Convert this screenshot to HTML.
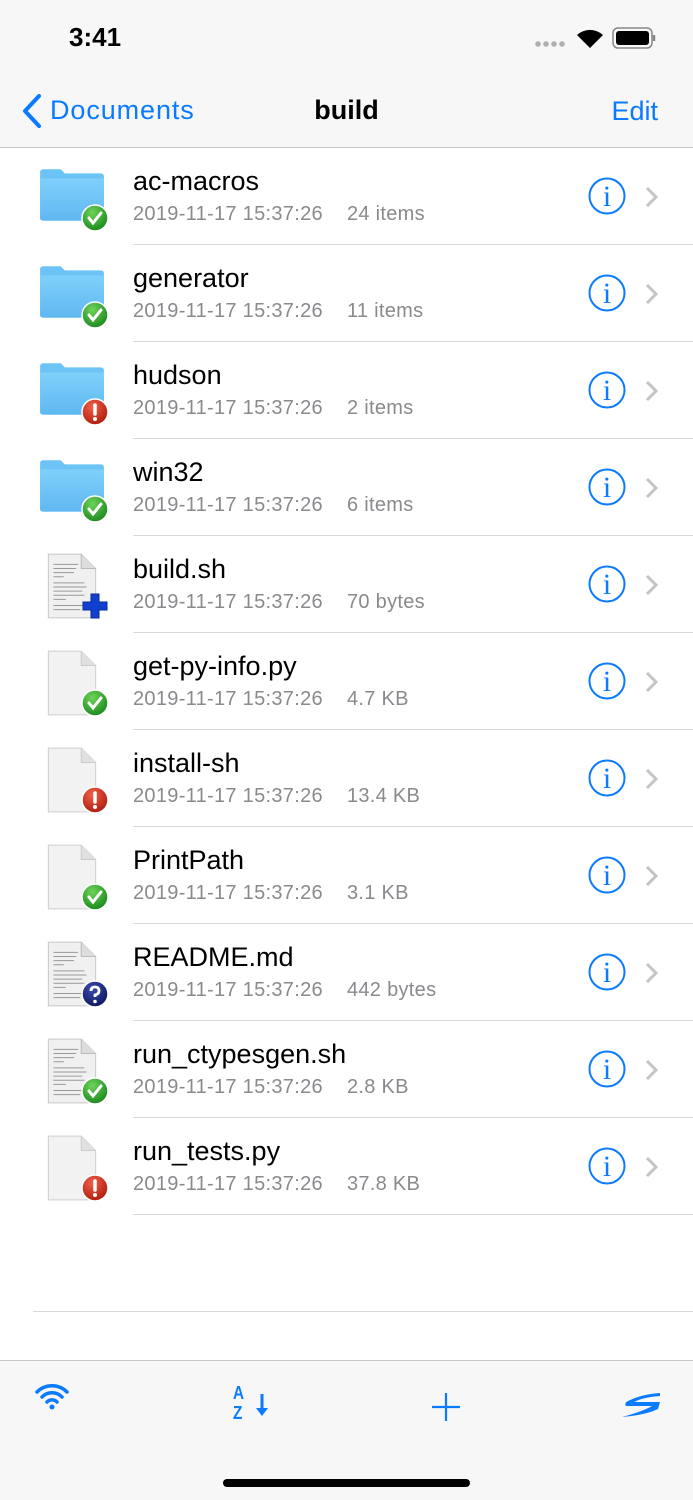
<!DOCTYPE html>
<html><head><meta charset="utf-8"><style>
*{margin:0;padding:0;box-sizing:border-box}
body{width:693px;height:1500px;background:#fff;font-family:"Liberation Sans",Helvetica,sans-serif;position:relative;overflow:hidden}
.top{position:absolute;left:0;top:0;width:693px;height:148px;background:#f7f7f7;border-bottom:1px solid #c8c8cc}
.time{position:absolute;left:69px;top:22px;font-size:26px;font-weight:bold;color:#000}
.back{position:absolute;left:50px;top:95px;font-size:27px;color:#0a7aff;letter-spacing:0.9px}
.title{position:absolute;left:0;width:693px;text-align:center;top:95px;font-size:27px;font-weight:bold}
.edit{position:absolute;right:35px;top:96px;font-size:27px;color:#0a7aff}
.row{position:absolute;left:0;width:693px;height:97px}
.row .sep{position:absolute;left:133px;right:0;bottom:0;height:1px;background:#d8d8dc}
.name{position:absolute;left:133px;top:18px;font-size:27px;color:#000}
.meta{position:absolute;left:133px;top:55px;font-size:20px;color:#8a8a8e;letter-spacing:0.3px}
.meta span{margin-left:24px}
.ic{position:absolute;left:36px;top:14px}
.info{position:absolute;left:588px;top:29px}
.chev{position:absolute;left:645px;top:38px}
.bot{position:absolute;left:0;top:1360px;width:693px;height:140px;background:#f7f7f7;border-top:1px solid #c8c8cc}
.home{position:absolute;left:223px;top:1479px;width:247px;height:8px;border-radius:4px;background:#000}
</style></head><body>
<svg width="0" height="0" style="position:absolute">
<defs>
<linearGradient id="fg" x1="0" y1="0" x2="0" y2="1"><stop offset="0" stop-color="#7fd0fb"/><stop offset="1" stop-color="#5fb8f0"/></linearGradient>
<radialGradient id="gg" cx="0.4" cy="0.3" r="0.7"><stop offset="0" stop-color="#6fd35a"/><stop offset="1" stop-color="#1b8a1e"/></radialGradient>
<radialGradient id="rg" cx="0.4" cy="0.3" r="0.7"><stop offset="0" stop-color="#f06048"/><stop offset="1" stop-color="#b01e10"/></radialGradient>
<radialGradient id="qg" cx="0.4" cy="0.3" r="0.7"><stop offset="0" stop-color="#3a4ab0"/><stop offset="1" stop-color="#101a60"/></radialGradient>
<symbol id="folder" viewBox="0 0 70 70"><path d="M4 10 q0-3 3-3 h17 l4 4 h35 q3 0 3 3 v40 q0 3-3 3 H7 q-3 0-3-3z" fill="#6cc3f5"/><path d="M4 16 h62 v38 q0 3-3 3 H7 q-3 0-3-3z" fill="url(#fg)"/></symbol>
<symbol id="doc" viewBox="0 0 70 70"><path d="M12 4 h32 l14 14 v48 H12z" fill="#f2f2f2" stroke="#d0d0d0"/><path d="M44 4 v14 h14" fill="#e0e0e0" stroke="#ccc"/></symbol>
<symbol id="txt" viewBox="0 0 70 70"><path d="M12 4 h32 l14 14 v48 H12z" fill="#f0f0f0" stroke="#c8c8c8"/><path d="M44 4 v14 h14" fill="#ddd" stroke="#bbb"/><g stroke="#999" stroke-width="1"><path d="M17 14h24M17 18h22M17 22h20M17 26h10M17 32h30M17 36h32M17 40h28M17 44h30M17 48h12M17 54h30M17 58h26"/></g></symbol>
<symbol id="ok" viewBox="0 0 28 28"><circle cx="14" cy="14" r="13" fill="url(#gg)" stroke="#fff" stroke-width="1.5"/><path d="M8 14 l4 5 l8-10" fill="none" stroke="#fff" stroke-width="3" stroke-linecap="round"/></symbol>
<symbol id="err" viewBox="0 0 28 28"><circle cx="14" cy="14" r="13" fill="url(#rg)" stroke="#fff" stroke-width="1.5"/><path d="M14 7 v9" stroke="#fff" stroke-width="3.5" stroke-linecap="round"/><circle cx="14" cy="21" r="2" fill="#fff"/></symbol>
<symbol id="q" viewBox="0 0 28 28"><circle cx="14" cy="14" r="13" fill="url(#qg)" stroke="#fff" stroke-width="1.5"/><path d="M10 11 q0-4 4-4 q4 0 4 4 q0 3-4 4 v2" fill="none" stroke="#fff" stroke-width="2.8"/><circle cx="14" cy="21.5" r="1.8" fill="#fff"/></symbol>
<symbol id="plus" viewBox="0 0 28 28"><path d="M10 2h8v8h8v8h-8v8h-8v-8H2v-8h8z" fill="#1040d0" stroke="#0a2a90"/></symbol>
<symbol id="info" viewBox="0 0 38 38"><circle cx="19" cy="19" r="17.5" fill="none" stroke="#0a7aff" stroke-width="2"/><text x="19" y="29" text-anchor="middle" font-family="Liberation Serif,serif" font-size="30" fill="#0a7aff">i</text></symbol>
</defs></svg>

<div class="top">
<div class="time">3:41</div>
<svg style="position:absolute;left:535px;top:40px" width="32" height="8"><g fill="#b0b0b0"><circle cx="3" cy="4" r="2.8"/><circle cx="11" cy="4" r="2.8"/><circle cx="19" cy="4" r="2.8"/><circle cx="27" cy="4" r="2.8"/></g></svg>
<svg style="position:absolute;left:575px;top:27px" width="30" height="22" viewBox="0 0 30 22"><path d="M15 21 L2 8 A19 19 0 0 1 28 8z" fill="#000"/></svg>
<svg style="position:absolute;left:612px;top:27px" width="46" height="22"><rect x="1" y="1" width="39" height="20" rx="5" fill="none" stroke="#888" stroke-width="1.5"/><rect x="4" y="4" width="33" height="14" rx="3" fill="#000"/><path d="M42 8v6" stroke="#888" stroke-width="2.5"/></svg>
<svg style="position:absolute;left:20px;top:93px" width="24" height="36"><path d="M19 3 L5 18 L19 33" fill="none" stroke="#0a7aff" stroke-width="4" stroke-linecap="round" stroke-linejoin="round"/></svg>
<div class="back">Documents</div>
<div class="title">build</div>
<div class="edit">Edit</div>
</div>

<div class="row" style="top:148px"><svg class="ic" width="72" height="72"><use href="#folder"/></svg><svg style="position:absolute;left:81px;top:56px" width="28" height="28"><use href="#ok"/></svg><div class="name">ac-macros</div><div class="meta">2019-11-17 15:37:26<span>24 items</span></div><svg class="info" width="38" height="38"><use href="#info"/></svg><svg class="chev" width="14" height="22"><path d="M2 2l9 9-9 9" fill="none" stroke="#c4c4c7" stroke-width="3"/></svg><div class="sep"></div></div>
<div class="row" style="top:245px"><svg class="ic" width="72" height="72"><use href="#folder"/></svg><svg style="position:absolute;left:81px;top:56px" width="28" height="28"><use href="#ok"/></svg><div class="name">generator</div><div class="meta">2019-11-17 15:37:26<span>11 items</span></div><svg class="info" width="38" height="38"><use href="#info"/></svg><svg class="chev" width="14" height="22"><path d="M2 2l9 9-9 9" fill="none" stroke="#c4c4c7" stroke-width="3"/></svg><div class="sep"></div></div>
<div class="row" style="top:342px"><svg class="ic" width="72" height="72"><use href="#folder"/></svg><svg style="position:absolute;left:81px;top:56px" width="28" height="28"><use href="#err"/></svg><div class="name">hudson</div><div class="meta">2019-11-17 15:37:26<span>2 items</span></div><svg class="info" width="38" height="38"><use href="#info"/></svg><svg class="chev" width="14" height="22"><path d="M2 2l9 9-9 9" fill="none" stroke="#c4c4c7" stroke-width="3"/></svg><div class="sep"></div></div>
<div class="row" style="top:439px"><svg class="ic" width="72" height="72"><use href="#folder"/></svg><svg style="position:absolute;left:81px;top:56px" width="28" height="28"><use href="#ok"/></svg><div class="name">win32</div><div class="meta">2019-11-17 15:37:26<span>6 items</span></div><svg class="info" width="38" height="38"><use href="#info"/></svg><svg class="chev" width="14" height="22"><path d="M2 2l9 9-9 9" fill="none" stroke="#c4c4c7" stroke-width="3"/></svg><div class="sep"></div></div>
<div class="row" style="top:536px"><svg class="ic" width="72" height="72"><use href="#txt"/></svg><svg style="position:absolute;left:81px;top:56px" width="28" height="28"><use href="#plus"/></svg><div class="name">build.sh</div><div class="meta">2019-11-17 15:37:26<span>70 bytes</span></div><svg class="info" width="38" height="38"><use href="#info"/></svg><svg class="chev" width="14" height="22"><path d="M2 2l9 9-9 9" fill="none" stroke="#c4c4c7" stroke-width="3"/></svg><div class="sep"></div></div>
<div class="row" style="top:633px"><svg class="ic" width="72" height="72"><use href="#doc"/></svg><svg style="position:absolute;left:81px;top:56px" width="28" height="28"><use href="#ok"/></svg><div class="name">get-py-info.py</div><div class="meta">2019-11-17 15:37:26<span>4.7 KB</span></div><svg class="info" width="38" height="38"><use href="#info"/></svg><svg class="chev" width="14" height="22"><path d="M2 2l9 9-9 9" fill="none" stroke="#c4c4c7" stroke-width="3"/></svg><div class="sep"></div></div>
<div class="row" style="top:730px"><svg class="ic" width="72" height="72"><use href="#doc"/></svg><svg style="position:absolute;left:81px;top:56px" width="28" height="28"><use href="#err"/></svg><div class="name">install-sh</div><div class="meta">2019-11-17 15:37:26<span>13.4 KB</span></div><svg class="info" width="38" height="38"><use href="#info"/></svg><svg class="chev" width="14" height="22"><path d="M2 2l9 9-9 9" fill="none" stroke="#c4c4c7" stroke-width="3"/></svg><div class="sep"></div></div>
<div class="row" style="top:827px"><svg class="ic" width="72" height="72"><use href="#doc"/></svg><svg style="position:absolute;left:81px;top:56px" width="28" height="28"><use href="#ok"/></svg><div class="name">PrintPath</div><div class="meta">2019-11-17 15:37:26<span>3.1 KB</span></div><svg class="info" width="38" height="38"><use href="#info"/></svg><svg class="chev" width="14" height="22"><path d="M2 2l9 9-9 9" fill="none" stroke="#c4c4c7" stroke-width="3"/></svg><div class="sep"></div></div>
<div class="row" style="top:924px"><svg class="ic" width="72" height="72"><use href="#txt"/></svg><svg style="position:absolute;left:81px;top:56px" width="28" height="28"><use href="#q"/></svg><div class="name">README.md</div><div class="meta">2019-11-17 15:37:26<span>442 bytes</span></div><svg class="info" width="38" height="38"><use href="#info"/></svg><svg class="chev" width="14" height="22"><path d="M2 2l9 9-9 9" fill="none" stroke="#c4c4c7" stroke-width="3"/></svg><div class="sep"></div></div>
<div class="row" style="top:1021px"><svg class="ic" width="72" height="72"><use href="#txt"/></svg><svg style="position:absolute;left:81px;top:56px" width="28" height="28"><use href="#ok"/></svg><div class="name">run_ctypesgen.sh</div><div class="meta">2019-11-17 15:37:26<span>2.8 KB</span></div><svg class="info" width="38" height="38"><use href="#info"/></svg><svg class="chev" width="14" height="22"><path d="M2 2l9 9-9 9" fill="none" stroke="#c4c4c7" stroke-width="3"/></svg><div class="sep"></div></div>
<div class="row" style="top:1118px"><svg class="ic" width="72" height="72"><use href="#doc"/></svg><svg style="position:absolute;left:81px;top:56px" width="28" height="28"><use href="#err"/></svg><div class="name">run_tests.py</div><div class="meta">2019-11-17 15:37:26<span>37.8 KB</span></div><svg class="info" width="38" height="38"><use href="#info"/></svg><svg class="chev" width="14" height="22"><path d="M2 2l9 9-9 9" fill="none" stroke="#c4c4c7" stroke-width="3"/></svg><div class="sep"></div></div>

<div style="position:absolute;left:33px;right:0;top:1311px;height:1px;background:#d8d8dc"></div>

<div class="bot">
<svg style="position:absolute;left:34px;top:20px" width="36" height="30" viewBox="0 0 36 30"><g fill="none" stroke="#0a7aff" stroke-width="3.5" stroke-linecap="round"><path d="M3 11 A21 21 0 0 1 33 11"/><path d="M8 16 A14 14 0 0 1 28 16"/><path d="M13 21 A7 7 0 0 1 23 21"/></g><circle cx="18" cy="26" r="2.5" fill="#0a7aff"/></svg>
<div style="position:absolute;left:233px;top:22px;font-size:18px;font-weight:bold;color:#0a7aff;line-height:20px;transform:scaleX(0.85);transform-origin:left">A<br>Z</div>
<svg style="position:absolute;left:255px;top:32px" width="16" height="26"><path d="M7 1 v18" stroke="#0a7aff" stroke-width="3"/><path d="M1 15 L7 23 L13 15z" fill="#0a7aff"/></svg>
<svg style="position:absolute;left:431px;top:31px" width="30" height="30"><path d="M15 1v28M1 15h28" stroke="#0a7aff" stroke-width="2.2"/></svg>
<svg style="position:absolute;left:620px;top:30px" width="42" height="30" viewBox="0 0 42 30"><path d="M40 2 Q22 3 8 10 Q4 12 6 15 L32 15 Q24 20 2 26 Q26 24 38 18 L40 11 L14 11 Q24 6 40 5z" fill="#0a7aff"/></svg>
</div>
<div class="home"></div>
</body></html>
